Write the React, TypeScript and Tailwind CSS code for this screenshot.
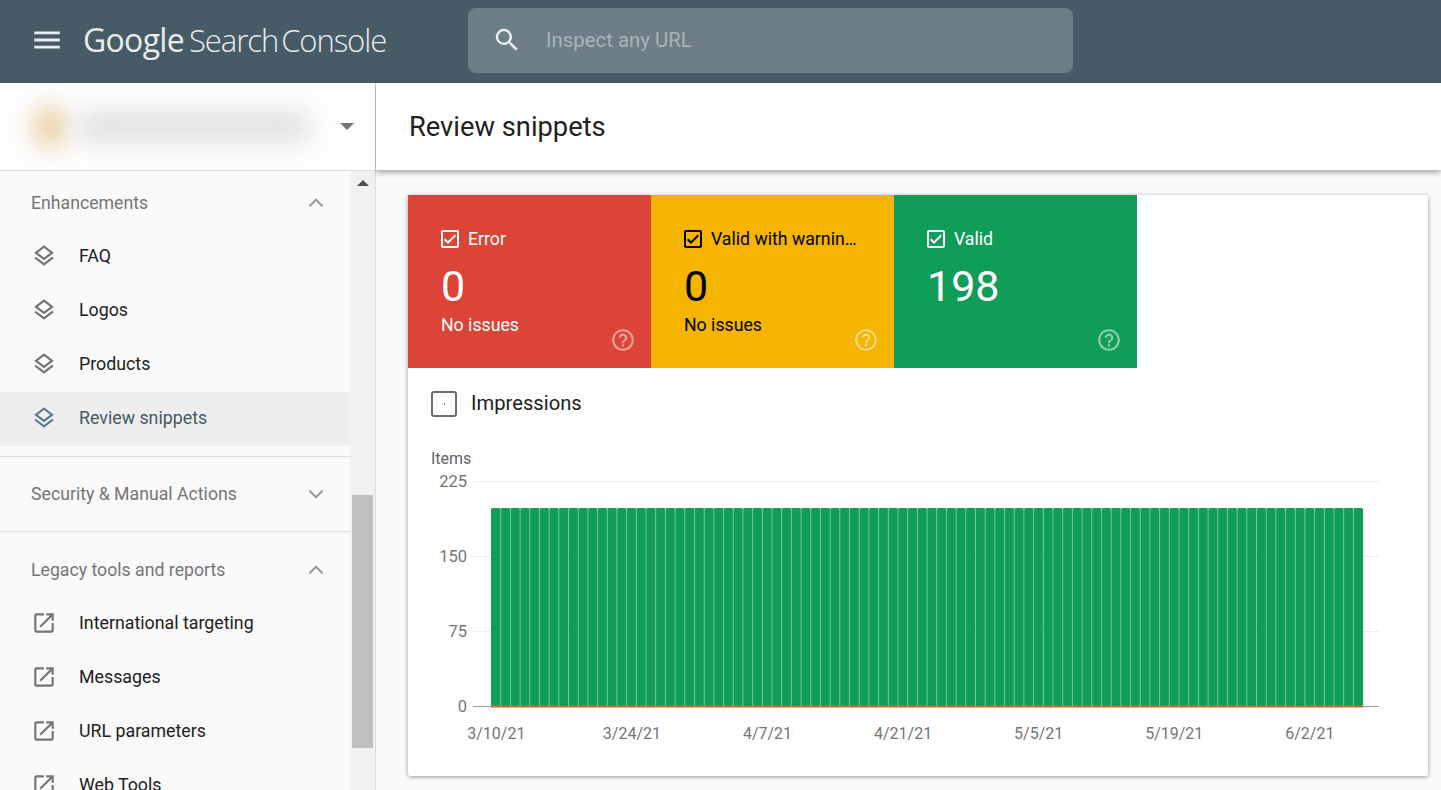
import React from "react";

const LAYERS = "M11.99 18.54l-7.37-5.73L3 14.07l9 7 9-7-1.63-1.27zM12 16l7.36-5.73L21 9l-9-7-9 7 1.63 1.27L12 16zm0-11.47L17.74 9 12 13.47 6.26 9 12 4.53z";
const OPEN = "M19 19H5V5h7V3H5c-1.11 0-2 .9-2 2v14c0 1.1.89 2 2 2h14c1.1 0 2-.9 2-2v-7h-2v7zM14 3v2h3.59l-9.83 9.83 1.41 1.41L19 6.41V10h2V3h-7z";
const HELP = "M11 18h2v-2h-2v2zm1-16C6.48 2 2 6.48 2 12s4.48 10 10 10 10-4.48 10-10S17.52 2 12 2zm0 18c-4.41 0-8-3.59-8-8s3.59-8 8-8 8 3.59 8 8-3.59 8-8 8zm0-14c-2.21 0-4 1.79-4 4h2c0-1.1.9-2 2-2s2 .9 2 2c0 2-3 1.75-3 5h2c0-2.25 3-2.5 3-5 0-2.21-1.79-4-4-4z";
const CHECK = "M19 3H5c-1.11 0-2 .9-2 2v14c0 1.1.89 2 2 2h14c1.11 0 2-.9 2-2V5c0-1.1-.89-2-2-2zm0 16H5V5h14v14zM17.99 9l-1.41-1.42-6.59 6.59-2.58-2.57-1.42 1.41 4 3.99z";

function Icon({ d, className }: { d: string; className: string }) {
  return (
    <svg viewBox="0 0 24 24" fill="currentColor" className={className}>
      <path d={d} />
    </svg>
  );
}

function Chevron({ up }: { up?: boolean }) {
  return (
    <svg viewBox="0 0 24 24" className="w-[26px] h-[26px] text-[#9a9a9a]" fill="none" stroke="currentColor" strokeWidth="1.8">
      <path d={up ? "M6 15l6-6 6 6" : "M6 9l6 6 6-6"} />
    </svg>
  );
}

function SectionHead({ title, up }: { title: string; up?: boolean }) {
  return (
    <div className="h-[54px] pb-[2px] flex items-center justify-between pl-[31px] pr-[21px] text-[17.7px] text-[#757575]">
      <span>{title}</span>
      <Chevron up={up} />
    </div>
  );
}

function NavRow({ icon, label, active }: { icon: string; label: string; active?: boolean }) {
  return (
    <div className={`h-[54px] pb-[2px] flex items-center pl-[31px] text-[17.8px] ${active ? "bg-[#eeeeee] text-[#455a64]" : "text-[#212121]"}`}>
      <Icon d={icon} className={`w-[26px] h-[26px] ${active ? "text-[#607d8b]" : "text-[#757575]"}`} />
      <span className="ml-[22px]">{label}</span>
    </div>
  );
}

function Tile({ bg, dark, title, value, note }: { bg: string; dark?: boolean; title: string; value: string; note?: string }) {
  return (
    <div className={`${bg} ${dark ? "text-black" : "text-white"} relative w-[243px] h-[173px] pl-[33px] pt-[32px]`}>
      <div className="flex items-center h-[24px] -ml-[3px] text-[17.7px]">
        <Icon d={CHECK} className="w-[24px] h-[24px]" />
        <span className="ml-[6px]">{title}</span>
      </div>
      <div className="text-[43px] leading-[48px] mt-[11px]">{value}</div>
      {note && <div className="text-[17.7px] leading-[24px] mt-[3px]">{note}</div>}
      <Icon d={HELP} className="absolute right-[15px] bottom-[15px] w-[26px] h-[26px] text-white/50" />
    </div>
  );
}

const xLabels = ["3/10/21", "3/24/21", "4/7/21", "4/21/21", "5/5/21", "5/19/21", "6/2/21"];

function Chart() {
  const bars = Array.from({ length: 90 }, (_, i) => i);
  return (
    <svg viewBox="0 0 906 227" className="w-[906px] h-[227px] block">
      {[0, 75, 150].map((y) => (
        <line key={y} x1="0" x2="906" y1={y + 0.5} y2={y + 0.5} stroke="#eeeeee" />
      ))}
      {bars.map((i) => (
        <rect key={i} x={18 + i * 9.69} y="27" width="9.69" height="198" rx="1.5" fill="#0f9d58" />
      ))}
      {bars.map((i) =>
        i === 0 ? null : (
          <line key={i} x1={18 + i * 9.69} x2={18 + i * 9.69} y1="27" y2="224" stroke="#7fc9a4" strokeWidth="0.8" />
        )
      )}
      <line x1="0" x2="906" y1="225.5" y2="225.5" stroke="#9e9e9e" />
      <line x1="18" x2="890" y1="225.5" y2="225.5" stroke="#d5652a" strokeWidth="2" />
    </svg>
  );
}

export default function App() {
  return (
    <div className="h-screen overflow-hidden flex flex-col font-['Roboto',sans-serif] bg-[#fafafa]">
      <header className="h-[83px] shrink-0 bg-[#475b67] flex items-center pb-[3px] text-white">
        <svg viewBox="0 0 24 24" fill="currentColor" className="w-[34px] h-[34px] ml-[30px] text-[#eceff1]">
          <path d="M3 18h18v-2H3v2zm0-5h18v-2H3v2zm0-7v2h18V6H3z" />
        </svg>
        <div className="w-[309px] ml-[19px] text-[31px] tracking-[-1.05px] [word-spacing:-4px] text-[#e9eced] font-['Open_Sans',sans-serif] font-light whitespace-nowrap">
          <span className="font-normal text-[32px] tracking-[-0.7px] mr-[2px]">Google</span> Search Console
        </div>
        <div className="ml-[76px] w-[605px] h-[65px] rounded-lg bg-[#6e7e86] flex items-center pl-[24px]">
          <svg viewBox="0 0 24 24" fill="currentColor" className="w-[30px] h-[30px] text-[#eceff1]">
            <path d="M15.5 14h-.79l-.28-.27A6.471 6.471 0 0 0 16 9.5 6.5 6.5 0 1 0 9.5 16c1.61 0 3.09-.59 4.23-1.57l.27.28v.79l5 4.99L20.49 19l-4.99-5zm-6 0C7.01 14 5 11.99 5 9.5S7.01 5 9.5 5 14 7.01 14 9.5 11.99 14 9.5 14z" />
          </svg>
          <span className="ml-[24px] text-[20.4px] text-[#a9b4b9]">Inspect any URL</span>
        </div>
      </header>

      <div className="flex-1 flex min-h-0">
        <aside className="w-[376px] shrink-0 border-r border-[#dcdcdc] flex flex-col">
          <div className="h-[88px] shrink-0 border-b border-[#dcdcdc] bg-[#fdfdfd] flex items-center relative overflow-hidden">
            <div className="w-[30px] h-[40px] ml-[35px] rounded-full bg-[#e8cc98] blur-[12px]" />
            <div className="w-[234px] h-[30px] ml-[12px] rounded-full bg-[#e0e0e0] blur-[12px]" />
            <div className="ml-[29px] w-0 h-0 border-x-[7px] border-x-transparent border-t-[7px] border-t-[#757575]" />
          </div>
          <div className="flex-1 flex min-h-0">
            <nav className="w-[350px] overflow-hidden">
              <div className="pt-[6px]">
                <SectionHead title="Enhancements" up />
              </div>
              <div className="-mt-[1px]">
                <NavRow icon={LAYERS} label="FAQ" />
                <NavRow icon={LAYERS} label="Logos" />
                <NavRow icon={LAYERS} label="Products" />
                <NavRow icon={LAYERS} label="Review snippets" active />
              </div>
              <div className="h-[10px] border-b border-[#e0e0e0] box-content" />
              <div className="pt-[11px] pb-[9px] border-b border-[#e0e0e0]">
                <SectionHead title="Security & Manual Actions" />
              </div>
              <div className="pt-[12px] -mb-[1px]">
                <SectionHead title="Legacy tools and reports" up />
              </div>
              <NavRow icon={OPEN} label="International targeting" />
              <NavRow icon={OPEN} label="Messages" />
              <NavRow icon={OPEN} label="URL parameters" />
              <NavRow icon={OPEN} label="Web Tools" />
            </nav>
            <div className="w-[25px] bg-[#f1f1f1] px-[2px] pt-[9px]">
              <div className="mx-auto w-0 h-0 border-x-[6px] border-x-transparent border-b-[6px] border-b-[#505050]" />
              <div className="w-[21px] h-[253px] mt-[309px] bg-[#bfbfbf]" />
            </div>
          </div>
        </aside>

        <main className="flex-1 min-w-0 flex flex-col">
          <div className="h-[87px] shrink-0 pt-[2px] bg-white shadow-[0_2px_6px_rgba(0,0,0,0.4)] flex items-center pl-[33px] text-[27.3px] text-[#212121]">
            Review snippets
          </div>
          <div className="mt-[25px] ml-[32px] w-[1020px] h-[581px] bg-white rounded-[2px] shadow-[0_1px_4px_rgba(0,0,0,0.4)]">
            <div className="flex">
              <Tile bg="bg-[#db4437]" title="Error" value="0" note="No issues" />
              <Tile bg="bg-[#f4b400]" dark title="Valid with warnin…" value="0" note="No issues" />
              <Tile bg="bg-[#0f9d58]" title="Valid" value="198" />
            </div>
            <div className="flex items-center h-[70px] pt-[1px] pl-[23px]">
              <div className="w-[26px] h-[26px] rounded-[3px] border-2 border-[#6e6e6e] flex items-center justify-center">
                <div className="w-[1px] h-[2px] bg-[#757575]" />
              </div>
              <span className="ml-[14px] text-[20.2px] text-[#212121]">Impressions</span>
            </div>
            <div className="pl-[23px] mt-[11px] text-[16px] leading-[20px] text-[#5f6368]">Items</div>
            <div className="flex items-start mt-[12px]">
              <div className="w-[59px] h-[241px] flex flex-col justify-between items-end text-[16.5px] text-[#757575] leading-[16px] -mt-[7px]">
                <span>225</span>
                <span>150</span>
                <span>75</span>
                <span>0</span>
              </div>
              <div className="ml-[6px]">
                <Chart />
              </div>
            </div>
            <div className="flex pl-[20.5px] mt-[7px] text-[16px] text-[#757575]">
              {xLabels.map((l) => (
                <div key={l} className="w-[135.6px] text-center">{l}</div>
              ))}
            </div>
          </div>
        </main>
      </div>
    </div>
  );
}
